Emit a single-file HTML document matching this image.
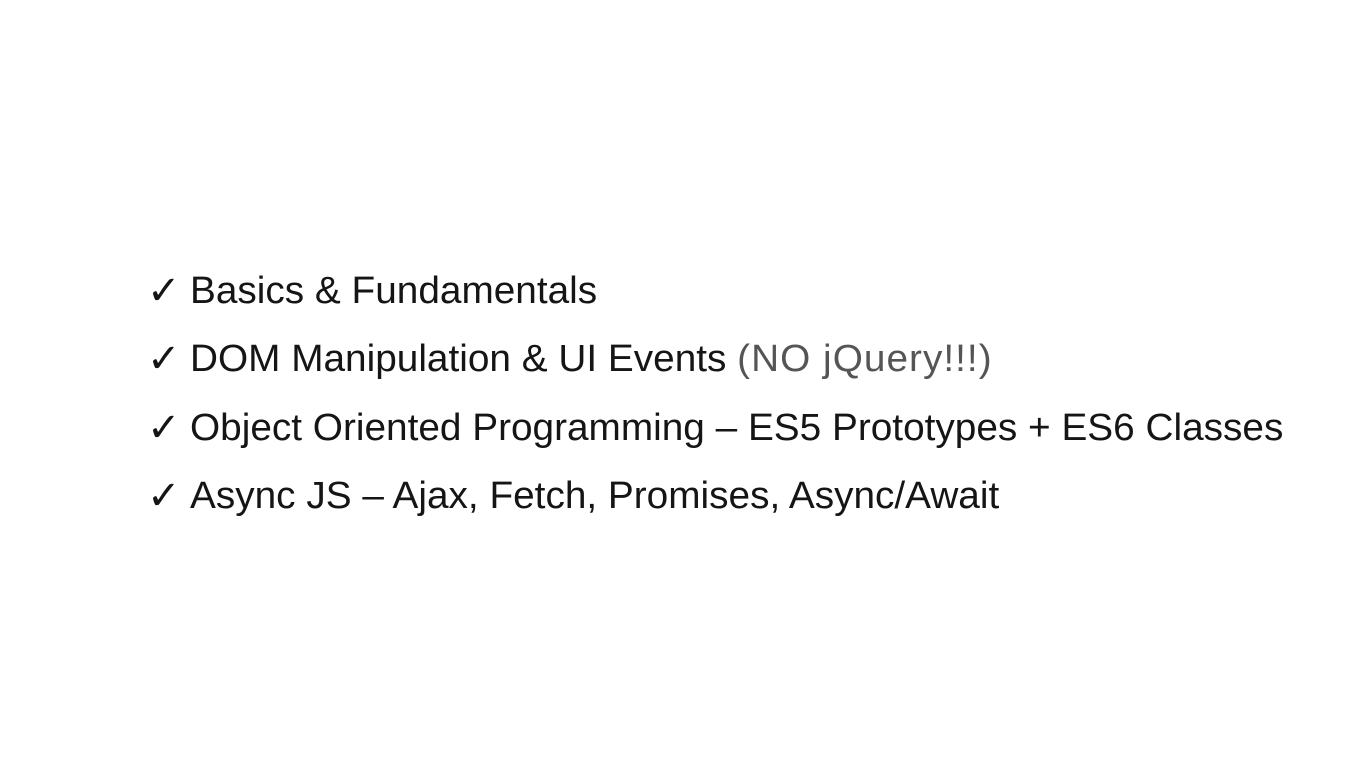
<!DOCTYPE html>
<html><head><meta charset="utf-8"><style>
html,body{margin:0;padding:0;background:#fff;width:1366px;height:768px;overflow:hidden}
.l{position:absolute;left:0;font-family:"Liberation Sans","DejaVu Sans",sans-serif;font-size:38px;color:#151515;white-space:nowrap;line-height:1}
.c{position:absolute;left:147px;top:-1px;font-family:"DejaVu Sans",sans-serif;font-size:40px;font-weight:bold;color:#151515;line-height:1}
.t{position:absolute;left:190px;transform-origin:0 0;transform:scaleX(1.02)}
.g{color:#555;letter-spacing:1px}
</style></head><body>
<div class="l" style="top:272px"><span class="c">✓</span><span class="t">Basics &amp; Fundamentals</span></div>
<div class="l" style="top:340px"><span class="c">✓</span><span class="t">DOM Manipulation &amp; UI Events <span class="g">(NO jQuery!!!)</span></span></div>
<div class="l" style="top:409px"><span class="c">✓</span><span class="t">Object Oriented Programming – ES5 Prototypes + ES6 Classes</span></div>
<div class="l" style="top:477px"><span class="c">✓</span><span class="t">Async JS – Ajax, Fetch, Promises, Async/Await</span></div>
</body></html>
